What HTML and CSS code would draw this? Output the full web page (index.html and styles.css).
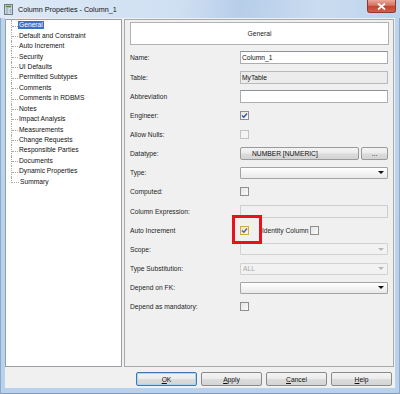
FILE: index.html
```html
<!DOCTYPE html>
<html>
<head>
<meta charset="utf-8">
<link rel="stylesheet" href="styles.css">
</head>
<body>
<div class="window">
  <div class="titlebar">
    <svg class="app-icon" width="10" height="11" viewBox="0 0 10 11">
      <rect x="0.5" y="0.5" width="8" height="10" fill="#e8ecef" stroke="#6d7b86"/>
      <rect x="1.5" y="1.5" width="6" height="2" fill="#5c8f3c"/>
      <rect x="1.5" y="4.5" width="3" height="1" fill="#7a8a96"/>
      <rect x="1.5" y="6.5" width="3" height="1" fill="#7a8a96"/>
      <rect x="1.5" y="8.5" width="3" height="1" fill="#7a8a96"/>
      <rect x="5.5" y="4.5" width="2" height="5" fill="#9bb6c9"/>
    </svg>
    <span class="title">Column Properties - Column_1</span>
    <div class="close">
      <svg width="9" height="7" viewBox="0 0 9 7"><path d="M1 0.5 L8 6.5 M8 0.5 L1 6.5" stroke="#ffffff" stroke-width="1.8"/></svg>
    </div>
  </div>
  <div class="client">
    <div class="main">
      <div class="tree">
        <ul class="nodes">
          <li><span class="node selected">General</span></li>
          <li><span class="node">Default and Constraint</span></li>
          <li><span class="node">Auto Increment</span></li>
          <li><span class="node">Security</span></li>
          <li><span class="node">UI Defaults</span></li>
          <li><span class="node">Permitted Subtypes</span></li>
          <li><span class="node">Comments</span></li>
          <li><span class="node">Comments in RDBMS</span></li>
          <li><span class="node">Notes</span></li>
          <li><span class="node">Impact Analysis</span></li>
          <li><span class="node">Measurements</span></li>
          <li><span class="node">Change Requests</span></li>
          <li><span class="node">Responsible Parties</span></li>
          <li><span class="node">Documents</span></li>
          <li><span class="node">Dynamic Properties</span></li>
          <li><span class="node">Summary</span></li>
        </ul>
      </div>
      <div class="panel">
        <div class="header">General</div>
        <div class="form">
          <div class="label">Name:</div>
          <div class="field">Column_1</div>

          <div class="label">Table:</div>
          <div class="field readonly">MyTable</div>

          <div class="label">Abbreviation</div>
          <div class="field"></div>

          <div class="label">Engineer:</div>
          <div class="cell"><span class="checkbox checked"><svg width="7" height="7" viewBox="0 0 7 7"><path d="M1 3.5 L2.8 5.3 L6 1.5" fill="none" stroke="#2f56a3" stroke-width="1.4"/></svg></span></div>

          <div class="label">Allow Nulls:</div>
          <div class="cell"><span class="checkbox disabled"></span></div>

          <div class="label">Datatype:</div>
          <div class="cell datatype">
            <span class="button wide">NUMBER [NUMERIC]</span>
            <span class="button dots">...</span>
          </div>

          <div class="label">Type:</div>
          <div class="combo"><span class="value"></span><span class="arrow"></span></div>

          <div class="label">Computed:</div>
          <div class="cell"><span class="checkbox"></span></div>

          <div class="label">Column Expression:</div>
          <div class="field disabled"></div>

          <div class="label">Auto Increment</div>
          <div class="cell">
            <span class="checkbox checked hover"><svg width="7" height="7" viewBox="0 0 7 7"><path d="M1 3.5 L2.8 5.3 L6 1.5" fill="none" stroke="#4a64a0" stroke-width="1.4"/></svg><span class="annotation"></span></span>
            <span class="inline-label">Identity Column</span>
            <span class="checkbox"></span>
          </div>

          <div class="label">Scope:</div>
          <div class="combo disabled"><span class="value"></span><span class="arrow"></span></div>

          <div class="label">Type Substitution:</div>
          <div class="combo disabled"><span class="value">ALL</span><span class="arrow"></span></div>

          <div class="label">Depend on FK:</div>
          <div class="combo"><span class="value"></span><span class="arrow"></span></div>

          <div class="label">Depend as mandatory:</div>
          <div class="cell"><span class="checkbox"></span></div>
        </div>
      </div>
    </div>
    <div class="buttons">
      <span class="button action default"><u>O</u>K</span>
      <span class="button action"><u>A</u>pply</span>
      <span class="button action"><u>C</u>ancel</span>
      <span class="button action"><u>H</u>elp</span>
    </div>
  </div>
</div>
</body>
</html>
```

FILE: styles.css
```css
* {
  box-sizing: border-box;
}

html, body {
  margin: 0;
  padding: 0;
  background: #ffffff;
}

body {
  font-family: "Liberation Sans", Arial, sans-serif;
  font-size: 6.7px;
  color: #111111;
}

.window {
  width: 400px;
  height: 394px;
  display: flex;
  flex-direction: column;
  background: linear-gradient(to bottom, #d3e3f4 0px, #bcd3ec 18px, #b9d1ea 100%);
  box-shadow: inset 1px 0 0 #8eaacb, inset -1px 0 0 #8eaacb, inset 0 -1px 0 #7c9bc0;
}

.titlebar {
  height: 18px;
  display: flex;
  align-items: flex-start;
  padding-left: 4px;
  background: linear-gradient(100deg, #dde9f6 0%, #cfdff2 45%, #b7cee9 60%, #cadcf0 80%, #bcd3ec 100%);
}

.app-icon {
  margin-top: 4px;
  flex: none;
}

.title {
  margin-left: 4px;
  margin-top: 5px;
  font-size: 7.2px;
  color: #111111;
  line-height: 9px;
}

.close {
  margin-left: auto;
  margin-right: 4px;
  width: 29px;
  height: 13px;
  display: flex;
  align-items: center;
  justify-content: center;
  background: linear-gradient(to bottom, #e9a99c 0%, #d7715f 45%, #c7432e 55%, #d2604a 100%);
  border: 1px solid #8b3a2d;
  border-top: 0;
  border-radius: 0 0 3px 3px;
}

.client {
  margin: 0 5px 0 5px;
  height: 370px;
  background: #f0f0f0;
  display: flex;
  flex-direction: column;
  padding-top: 1px;
}

.main {
  height: 348px;
  display: flex;
  gap: 2px;
}

.tree {
  width: 117px;
  background: #ffffff;
  border: 1px solid #9a9ea5;
}

.nodes {
  list-style: none;
  margin: 0;
  padding: 0 0 0 5px;
}

.nodes li {
  height: 10.45px;
  display: flex;
  align-items: center;
  border-left: 1px dotted #a8a8a8;
}

.nodes li::before {
  content: "";
  width: 6px;
  height: 5.5px;
  align-self: flex-start;
  border-bottom: 1px dotted #a8a8a8;
  flex: none;
}

.nodes li:last-child {
  border-left: 0;
}

.nodes li:last-child::before {
  width: 7px;
  border-left: 1px dotted #a8a8a8;
}

.node {
  padding: 0 1px;
  line-height: 8px;
  white-space: nowrap;
  color: #111111;
}

.node.selected {
  background: #3a6fc9;
  color: #ffffff;
}

.panel {
  width: 270px;
  border: 1px solid #a9a9a9;
  padding: 2px 0 0 5px;
}

.header {
  width: 259px;
  height: 23px;
  background: #ffffff;
  border: 1px solid #b2b2b2;
  display: flex;
  align-items: center;
  justify-content: center;
  color: #222222;
}

.form {
  margin-top: 3.4px;
  display: grid;
  grid-template-columns: 110px 148px;
  grid-auto-rows: 19.15px;
  align-items: center;
}

.label {
  color: #1e1e1e;
  white-space: nowrap;
}

.field {
  height: 13px;
  background: #ffffff;
  border: 1px solid #abadb3;
  border-top-color: #8e9299;
  padding: 0 1px;
  display: flex;
  align-items: center;
  color: #111111;
}

.field.readonly {
  background: #ececec;
  border-color: #b9b9b9;
}

.field.disabled {
  background: #f0f0f0;
  border-color: #cdcdcd;
}

.cell {
  display: flex;
  align-items: center;
}

.checkbox {
  position: relative;
  width: 9px;
  height: 9px;
  border: 1px solid #8f8f8f;
  background: linear-gradient(135deg, #e4e4e4 0%, #fbfbfb 100%);
  display: flex;
  align-items: center;
  justify-content: center;
  flex: none;
}

.checkbox.disabled {
  border-color: #c3c3c3;
  background: #f4f4f4;
}

.checkbox.hover {
  border-color: #d6a84a;
  background: linear-gradient(135deg, #f3e4bd 0%, #fdf5e2 100%);
}

.annotation {
  position: absolute;
  left: -9px;
  top: -12px;
  width: 30px;
  height: 29px;
  border: 3px solid #e8121b;
}

.inline-label {
  margin-left: 13px;
  margin-right: 2px;
  color: #1e1e1e;
}

.datatype {
  gap: 2px;
}

.button {
  height: 13px;
  display: flex;
  align-items: center;
  background: linear-gradient(to bottom, #f3f3f3 0%, #ebebeb 48%, #dcdcdc 52%, #d4d4d4 100%);
  border: 1px solid #9a9a9a;
  border-radius: 2px;
  color: #111111;
  white-space: nowrap;
}

.button.wide {
  width: 119px;
  padding-left: 11px;
}

.button.dots {
  width: 27px;
  justify-content: center;
}

.combo {
  height: 12px;
  display: flex;
  align-items: center;
  background: linear-gradient(to bottom, #ffffff 0%, #f4f4f4 50%, #e9e9e9 100%);
  border: 1px solid #a4a4a4;
  border-radius: 1px;
}

.combo .value {
  flex: 1;
  padding-left: 2px;
}

.combo .arrow {
  width: 0;
  height: 0;
  margin-right: 3px;
  border-left: 3px solid transparent;
  border-right: 3px solid transparent;
  border-top: 3px solid #111111;
}

.combo.disabled {
  background: #f2f2f2;
  border-color: #d2d2d2;
}

.combo.disabled .value {
  color: #a9a9a9;
}

.combo.disabled .arrow {
  border-top-color: #b8b8b8;
}

.buttons {
  flex: 1;
  display: flex;
  justify-content: flex-end;
  align-items: flex-start;
  gap: 4px;
  padding: 5px 3px 0 0;
}

.button.action {
  width: 61px;
  height: 14px;
  justify-content: center;
  border-color: #8a8a8a;
}

.button.action.default {
  border-color: #3d7bad;
  box-shadow: inset 0 0 0 1px #a9d4f2;
}

.button u {
  text-decoration-thickness: 1px;
}
```
